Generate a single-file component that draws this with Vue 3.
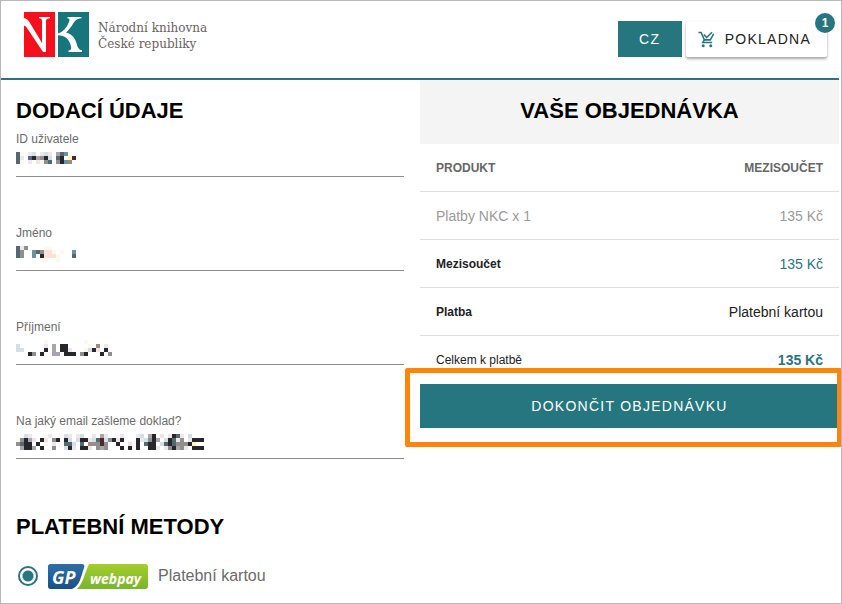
<script setup>
import { ref } from 'vue'

// Personal values are masked by a mosaic: one letter per 4px block.
const fields = [
  {
    id: 'uid',
    label: 'ID uživatele',
    type: 'text',
    rows: ['sy.lc.lcl.psty.', 'sl.ukpgkc.skywb', 'sy.l.lygs.gktn.'],
  },
  {
    id: 'first-name',
    label: 'Jméno',
    type: 'text',
    rows: ['slg....yy......', 'sg..tsgooy.y..t', 'sg..t.koooy...s', '......yy..y....'],
  },
  {
    id: 'last-name',
    label: 'Příjmení',
    type: 'text',
    rows: [
      '.......y.........y......',
      'c......l.p.kk.....y.n.l.',
      'cc.....k.p.kkl...yckl.k.',
      '...kg.k..pp.kkk.gk...k.g',
    ],
  },
  {
    id: 'email',
    label: 'Na jaký email zašleme doklad?',
    type: 'email',
    rows: [
      '..cl....l...cl.lc..l.pl...l...lc.pk.l.lksl.c...',
      'ygkpl.kl.gk.kc.ckklcsbcgklk...klcgkp.ckslg.lkkk',
      'gskk.k.y.l..ssc.s.nggbg..k..l.k.skk.csksgggkw..',
      '.pkkp.k..g..ckl.kkl.gpg...k.k.k..kkl.lgkpgl.kkk',
    ],
  },
]

const tones = {
  k: '#26262b',
  s: '#55686e',
  g: '#8f8f8f',
  l: '#efe6ec',
  p: '#a9a4ae',
  t: '#6d929b',
  u: '#566b8c',
  o: '#fbe2d6',
  y: '#fdf8ee',
  c: '#d2dfe8',
  w: '#fbf3c8',
  n: '#a08a78',
  b: '#4a2b2b',
}

function blocks(rows) {
  return rows.flatMap((row, y) =>
    [...row].flatMap((tone, x) => (tone === '.' ? [] : [{ x: x * 4, y: y * 4, fill: tones[tone] }])),
  )
}

const order = [
  { name: 'Platby NKC x 1', value: '135 Kč', kind: 'item' },
  { name: 'Mezisoučet', value: '135 Kč', kind: 'subtotal' },
  { name: 'Platba', value: 'Platební kartou', kind: 'payment' },
  { name: 'Celkem k platbě', value: '135 Kč', kind: 'total' },
]

const method = ref('card')
</script>

<template>
  <div class="page">
    <header class="topbar">
      <a class="brand" href="#">
        <svg class="brand-mark" viewBox="0 0 65 45" aria-hidden="true">
          <rect width="31" height="45" fill="#f5101c" />
          <rect x="34" width="31" height="45" fill="#17757c" />
          <path
            d="M0 6 C3 6.500 4.500 8.500 6 11 L18 31 V9 C18 7 17 6.500 15 6.300 V5 H26 V6.300 C23.500 6.500 22 7 22 9 V40 H19 L4 17.500 C2.500 15 1.500 14 0 13.500 Z"
            fill="#fff"
          />
          <path
            d="M34 21.500 C39 20 42.500 16 44.500 11 C46 8 46 6.800 43.500 6.300 V5 H57.500 V6.300 C53.500 6.600 51.500 8 49.500 11 C47 15 44.500 18.500 42 20.500 C47 21.500 50.500 25 52.500 31 C53.700 36 55 37.800 58 38.300 V40 H44.500 V38.500 C48 38 47.500 36 46.300 32 C44.500 27 41 23.600 34 23.300 Z"
            fill="#fff"
          />
        </svg>
        <span class="brand-name">Národní knihovna<br />České republiky</span>
      </a>
      <nav class="actions">
        <button class="btn btn-lang" type="button">CZ</button>
        <button class="btn btn-cart" type="button">
          <svg class="cart-icon" viewBox="0 0 18 18" aria-hidden="true">
            <g fill="none" stroke="#26767f" stroke-width="1.600">
              <path d="M0.500 1.600 H3.300 L6.700 9.400 H13 L16.600 3" />
              <path d="M6.700 9.400 L5 12.300 H15" />
              <path d="M6.200 3.800 L9.300 6.800 L14.800 1.300" />
            </g>
            <circle cx="5.500" cy="15.600" r="1.600" fill="#26767f" />
            <circle cx="13.500" cy="15.600" r="1.600" fill="#26767f" />
          </svg>
          <span>POKLADNA</span>
          <span class="badge">1</span>
        </button>
      </nav>
    </header>

    <main class="columns">
      <section class="details">
        <h2>DODACÍ ÚDAJE</h2>
        <form class="fields">
          <div v-for="field in fields" :key="field.id" class="field">
            <label :for="field.id">{{ field.label }}</label>
            <div class="control">
              <input :id="field.id" :type="field.type" />
              <svg class="mosaic" width="192" height="16" aria-hidden="true">
                <rect
                  v-for="(b, i) in blocks(field.rows)"
                  :key="i"
                  :x="b.x"
                  :y="b.y"
                  width="4"
                  height="4"
                  :fill="b.fill"
                />
              </svg>
            </div>
          </div>
        </form>

        <h2 class="methods-title">PLATEBNÍ METODY</h2>
        <label class="method">
          <input v-model="method" type="radio" name="method" value="card" />
          <svg class="gp-logo" viewBox="0 0 100 25" aria-hidden="true">
            <defs>
              <linearGradient id="gp-green" x1="0" y1="0" x2="0" y2="1">
                <stop offset="0" stop-color="#a5ce2a" />
                <stop offset="1" stop-color="#78b52c" />
              </linearGradient>
              <linearGradient id="gp-blue" x1="0" y1="0" x2="0" y2="1">
                <stop offset="0" stop-color="#2c70a8" />
                <stop offset="1" stop-color="#1b4f86" />
              </linearGradient>
            </defs>
            <rect width="100" height="25" rx="3" fill="url(#gp-green)" />
            <path d="M33 0 H41 C37 8 35 20 29 25 H20 Z" fill="#fff" />
            <path d="M3 0 H33 C36 0 37 1 36 4 C33 12 32 22 24 25 H3 Q0 25 0 22 V3 Q0 0 3 0 Z" fill="url(#gp-blue)" />
            <text class="gp-text gp-big" x="4" y="20">GP</text>
            <text class="gp-text gp-small" x="42" y="20">webpay</text>
          </svg>
          <span>Platební kartou</span>
        </label>
      </section>

      <section class="summary">
        <h2 class="summary-title">VAŠE OBJEDNÁVKA</h2>
        <table>
          <thead>
            <tr>
              <th scope="col">PRODUKT</th>
              <th scope="col">MEZISOUČET</th>
            </tr>
          </thead>
          <tbody>
            <tr v-for="row in order" :key="row.name" :class="row.kind">
              <td>{{ row.name }}</td>
              <td>{{ row.value }}</td>
            </tr>
          </tbody>
        </table>
        <div class="submit">
          <button class="btn btn-submit" type="button">DOKONČIT OBJEDNÁVKU</button>
        </div>
      </section>
    </main>
  </div>
</template>

<style>
body {
  margin: 0;
  background: #fff;
}
</style>

<style scoped>
.page {
  box-sizing: border-box;
  min-height: 100vh;
  padding-right: 2px;
  border: 1px solid #b9b9b9;
  overflow: hidden;
  color: #222;
  font-family: 'Liberation Sans', Arial, sans-serif;
  font-size: 14px;
}

.topbar {
  display: flex;
  justify-content: space-between;
  align-items: flex-start;
  box-sizing: border-box;
  height: 79px;
  padding: 11px 12px 0 23px;
  border-bottom: 2px solid #26767f;
}

.brand {
  display: flex;
  gap: 9px;
  color: #6a625f;
  text-decoration: none;
}

.brand-mark {
  width: 65px;
  height: 45px;
}

.brand-name {
  padding-top: 8px;
  font-family: 'DejaVu Serif', serif;
  font-size: 12px;
  line-height: 16px;
}

.actions {
  display: flex;
  gap: 4px;
  padding-top: 9px;
}

.btn {
  border: 0;
  color: #fff;
  background: #26767f;
  font: inherit;
  letter-spacing: 0.09em;
}

.btn-lang {
  width: 64px;
  height: 36px;
}

.btn-cart {
  position: relative;
  display: flex;
  align-items: center;
  gap: 10px;
  height: 36px;
  padding: 0 16px 0 12px;
  color: #222;
  background: #fff;
  border-radius: 2px;
  box-shadow: 0 2px 3px rgba(0, 0, 0, 0.35), 0 0 1px rgba(0, 0, 0, 0.15);
}

.cart-icon {
  width: 17px;
  height: 17px;
}

.badge {
  position: absolute;
  top: -8px;
  right: -8px;
  width: 20px;
  height: 20px;
  border-radius: 50%;
  color: #fff;
  background: #26767f;
  font-size: 12px;
  font-weight: 700;
  line-height: 20px;
  letter-spacing: 0;
  text-align: center;
}

.columns {
  display: grid;
  grid-template-columns: 1fr 1fr;
  align-items: start;
}

h2 {
  margin: 0;
  color: #000;
  font-size: 22px;
  font-weight: 700;
  line-height: 32px;
}

.details {
  padding: 15px 16px 11px 15px;
}

.fields {
  display: grid;
  gap: 48px;
  padding-top: 4px;
}

.field label {
  display: block;
  color: #6b6b6b;
  font-size: 12px;
  line-height: 16px;
}

.control {
  position: relative;
}

.control input {
  display: block;
  box-sizing: border-box;
  width: 100%;
  height: 30px;
  padding: 0;
  border: 0;
  border-bottom: 1px solid #8c8c8c;
  background: transparent;
  font: inherit;
  outline: none;
}

.mosaic {
  position: absolute;
  top: 5px;
  left: 0;
  pointer-events: none;
}

.methods-title {
  margin-top: 52px;
}

.method {
  display: flex;
  align-items: center;
  gap: 10px;
  height: 32px;
  margin-top: 17px;
  padding-left: 2px;
  color: #6b6b6b;
  font-size: 16px;
}

.method input {
  appearance: none;
  box-sizing: border-box;
  width: 20px;
  height: 20px;
  margin: 0;
  border: 2px solid #26767f;
  border-radius: 50%;
  background: radial-gradient(circle, #26767f 5px, #fff 6px);
}

.gp-logo {
  width: 100px;
  height: 25px;
}

.gp-text {
  fill: #fff;
  font-family: 'Noto Sans', sans-serif;
  font-style: italic;
  font-weight: 700;
}

.gp-big {
  font-size: 18px;
}

.gp-small {
  font-size: 14px;
}

.summary-title {
  padding: 15px 0 17px;
  background: #f4f4f4;
  text-align: center;
}

table {
  width: 100%;
  border-collapse: separate;
  border-spacing: 0;
}

th,
td {
  box-sizing: border-box;
  height: 48px;
  padding: 0 16px;
  border-bottom: 1px solid #dedede;
  font-weight: 400;
  text-align: left;
}

th {
  color: #666;
  font-size: 12px;
  font-weight: 700;
}

td:first-child {
  font-size: 12px;
}

th:last-child,
td:last-child {
  text-align: right;
}

.item td,
.item td:first-child {
  color: #9a9a9a;
  font-size: 14px;
}

.subtotal td:first-child,
.payment td:first-child {
  font-weight: 700;
}

.subtotal td:last-child,
.total td:last-child {
  color: #26767f;
}

.total td {
  border-bottom: 0;
}

.total td:last-child {
  font-weight: 700;
}

.submit {
  position: relative;
}

.submit::after {
  content: '';
  position: absolute;
  inset: -16px -3px -19px -15px;
  border: 5px solid #ff8409;
  border-radius: 2px;
  pointer-events: none;
}

.btn-submit {
  display: block;
  width: 100%;
  height: 44px;
}
</style>
